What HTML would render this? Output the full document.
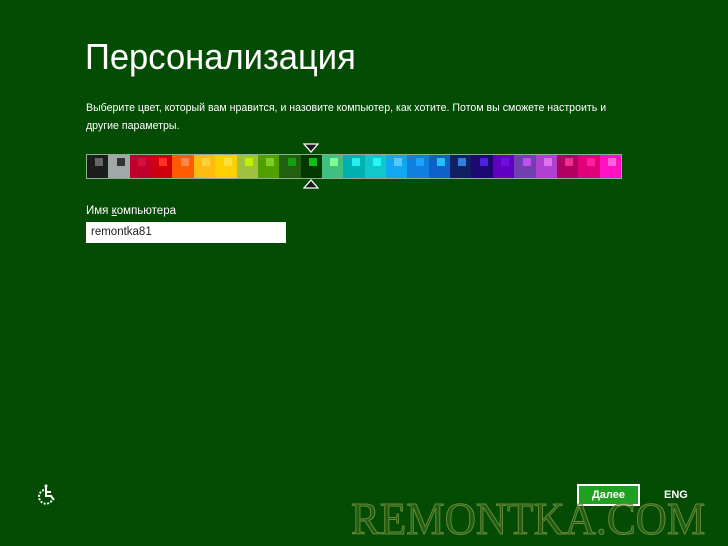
<!DOCTYPE html>
<html><head><meta charset="utf-8"><style>
body{margin:0;width:728px;height:546px;background:#044c04;position:relative;overflow:hidden;font-family:"Liberation Sans","DejaVu Sans",sans-serif;color:#fff}
.t{position:absolute;left:85px;top:36px;font-size:36px;font-weight:normal;white-space:nowrap;transform:scaleX(0.96);transform-origin:left}
.d{position:absolute;left:86px;top:99px;font-size:10.6px;line-height:18px;width:560px}
.pal{position:absolute;left:86px;top:154px;width:534px;height:23px;border:1px solid #8cb08c;display:flex}
.pal div{flex:1;position:relative}
.pal div i{position:absolute;right:5px;top:3px;width:8px;height:8px}
.lbl{position:absolute;left:86px;top:205px;font-size:11.5px}
.inp{position:absolute;left:86px;top:222px;width:200px;height:21px;background:#fff;color:#222;font-size:11.5px;line-height:21px;box-sizing:border-box;padding-left:5px}
.btn{position:absolute;left:577px;top:484px;width:63px;height:22px;background:#20a020;border:2px solid #fff;box-sizing:border-box;font-size:11px;font-weight:bold;text-align:center;line-height:18px}
.eng{position:absolute;left:664px;top:489px;font-size:11px;font-weight:bold}
.wm{position:absolute;left:351px;top:492px;font-family:"Liberation Serif",serif;font-size:46px;color:rgba(90,130,40,0.35);-webkit-text-stroke:1px #6a8a3a;white-space:nowrap;transform:scaleX(0.94);transform-origin:left}
</style></head><body>
<div class="t">Персонализация</div>
<div class="d">Выберите цвет, который вам нравится, и назовите компьютер, как хотите. Потом вы сможете настроить и<br>другие параметры.</div>
<svg style="position:absolute;left:303px;top:143px" width="16" height="10"><polygon points="1,1 15,1 8,9" fill="#1a1a1a" stroke="#fff" stroke-width="1.3"/></svg>
<div class="pal">
<div style="background:#1d1d1d"><i style="background:#666"></i></div>
<div style="background:#a0a8a8"><i style="background:#333"></i></div>
<div style="background:#c0002a"><i style="background:#d81040"></i></div>
<div style="background:#d00010"><i style="background:#ff3020"></i></div>
<div style="background:#ff5a00"><i style="background:#ff8848"></i></div>
<div style="background:#ffbb10"><i style="background:#ffd040"></i></div>
<div style="background:#ffd000"><i style="background:#ffe040"></i></div>
<div style="background:#a0c040"><i style="background:#c0f000"></i></div>
<div style="background:#50a000"><i style="background:#80d020"></i></div>
<div style="background:#206010"><i style="background:#10a010"></i></div>
<div style="background:#003800"><i style="background:#10c010"></i></div>
<div style="background:#40c080"><i style="background:#80ff90"></i></div>
<div style="background:#00b0b0"><i style="background:#20f0f0"></i></div>
<div style="background:#10c8c8"><i style="background:#20f8f8"></i></div>
<div style="background:#10a8f0"><i style="background:#58c8ff"></i></div>
<div style="background:#1080e0"><i style="background:#20a0ff"></i></div>
<div style="background:#1060c8"><i style="background:#20c0ff"></i></div>
<div style="background:#102060"><i style="background:#3080e0"></i></div>
<div style="background:#1c0870"><i style="background:#5020e0"></i></div>
<div style="background:#6000c0"><i style="background:#7010e0"></i></div>
<div style="background:#7040b0"><i style="background:#c050f0"></i></div>
<div style="background:#b040d0"><i style="background:#e070f0"></i></div>
<div style="background:#b00060"><i style="background:#f03090"></i></div>
<div style="background:#e0007a"><i style="background:#ff20a0"></i></div>
<div style="background:#ff10c0"><i style="background:#ff60e0"></i></div>
</div>
<svg style="position:absolute;left:303px;top:179px" width="16" height="10"><polygon points="1,9 15,9 8,1" fill="#1a1a1a" stroke="#fff" stroke-width="1.3"/></svg>
<div class="lbl">Имя <u>к</u>омпьютера</div>
<div class="inp">remontka81</div>
<svg style="position:absolute;left:36px;top:483px" width="22" height="22" fill="none" stroke="#fff" stroke-width="2"><path d="M8 7 A7 7 0 1 0 17 14" stroke-dasharray="2 1.5"/><path d="M10 4 V13 H15 L18 17"/><circle cx="10" cy="3" r="1.5" fill="#fff" stroke="none"/><path d="M10 9 H15"/></svg>
<div class="btn">Далее</div>
<div class="eng">ENG</div>
<div class="wm">REMONTKA.COM</div>
</body></html>
